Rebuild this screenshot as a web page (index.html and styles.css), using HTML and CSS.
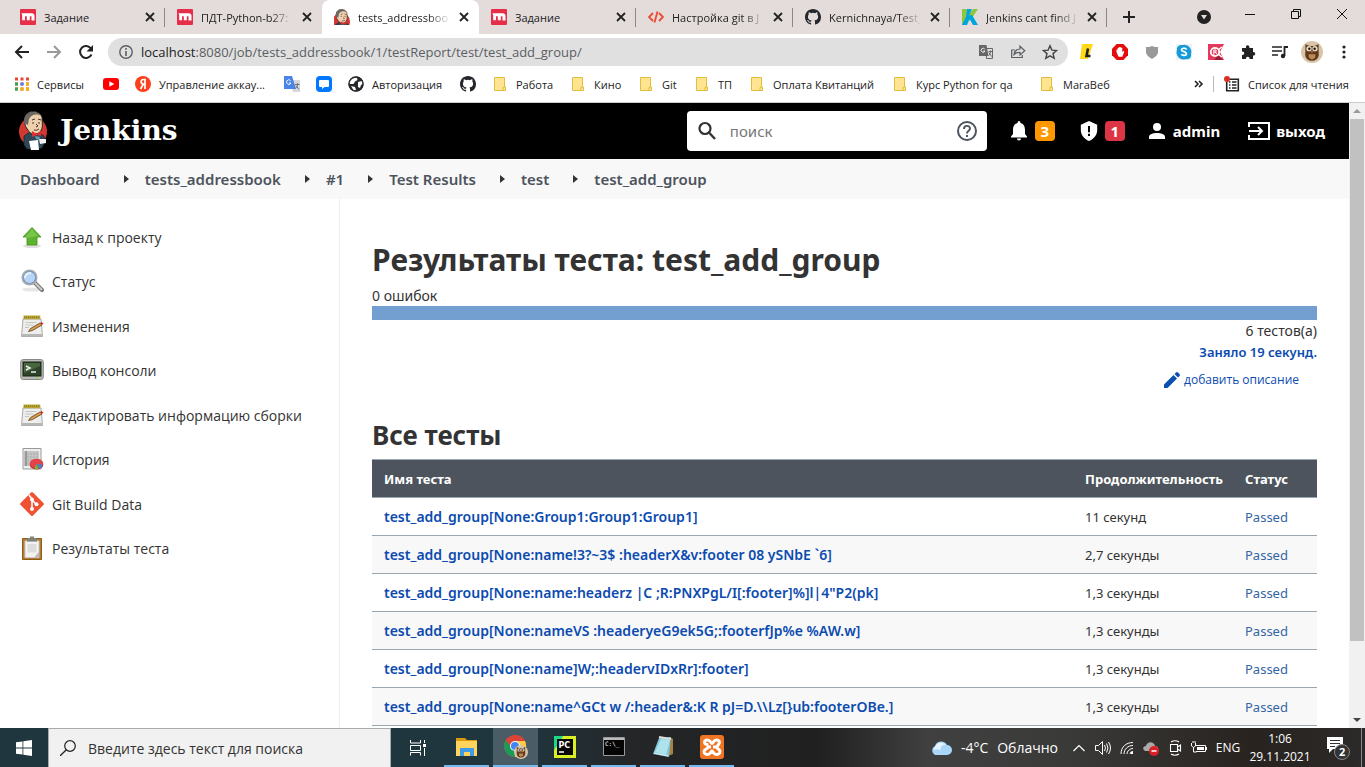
FILE: index.html
```html
<!DOCTYPE html>
<html lang="ru">
<head>
<meta charset="utf-8">
<title>Результаты теста: test_add_group</title>
<link rel="stylesheet" href="styles.css">
</head>
<body>
<svg class="defs" aria-hidden="true">
  <symbol id="x" viewBox="0 0 10 10"><path d="M1 1l8 8M9 1L1 9" stroke="#222" stroke-width="1.8"/></symbol>
  <symbol id="miro" viewBox="0 0 16 16"><rect width="16" height="16" rx="1" fill="#e62e48"/><path d="M1.500 4.200h10.300c1.600 0 2.700 1 2.700 2.400v5h-3V7.300H9.800v4H6.800v-4H5v4H2.200V6.200z" fill="#fff"/></symbol>
  <symbol id="github" viewBox="0 0 16 16"><path fill="#24262b" d="M8 0C3.580 0 0 3.580 0 8c0 3.540 2.290 6.530 5.470 7.590.4.070.55-.17.55-.38v-1.490c-2.010.37-2.530-.49-2.690-.94-.09-.23-.48-.94-.82-1.130-.28-.15-.68-.52-.01-.53.630-.01 1.080.58 1.230.82.720 1.210 1.870.87 2.330.66.070-.52.280-.87.510-1.070-1.780-.2-3.640-.89-3.640-3.950 0-.87.310-1.590.820-2.150-.08-.2-.36-1.020.080-2.120 0 0 .67-.21 2.200.82a7.600 7.600 0 0 1 4 0c1.530-1.040 2.200-.82 2.200-.82.440 1.100.160 1.920.080 2.120.510.56.820 1.270.820 2.150 0 3.070-1.870 3.750-3.650 3.950.290.25.540.73.540 1.480v2.200c0 .21.150.46.550.38A8 8 0 0 0 16 8c0-4.420-3.580-8-8-8z"/></symbol>
  <symbol id="folder" viewBox="0 0 12 14"><path d="M.5.500h10v9.500h1v3.500H.5z" fill="#ffe591" stroke="#e3bd3d"/><path d="M9 13.300v-3h1.500" fill="none" stroke="#e3bd3d"/></symbol>
  <symbol id="owl" viewBox="0 0 20 20"><circle cx="10" cy="10" r="10" fill="#d8c5a8"/><path d="M4 3l4 1.500h4L16 3v7c1 5-2 8-6 8s-7-3-6-8z" fill="#62391e"/><circle cx="7.300" cy="7" r="2.400" fill="#eadfc7"/><circle cx="12.700" cy="7" r="2.400" fill="#eadfc7"/><circle cx="7.600" cy="7" r="1.100" fill="#21150d"/><circle cx="12.400" cy="7" r="1.100" fill="#21150d"/><path d="M9 9h2l-1 2zM7 12h6v3l-3 2-3-2z" fill="#b78a58"/></symbol>
  <symbol id="butler" viewBox="0 0 30 40"><ellipse cx="15" cy="20.500" rx="14" ry="14.500" fill="#d33833"/><path d="M6 25l6-4 8 0 6 4 1 6-3 6-4 1-11 0-3-4z" fill="#2f4858" stroke="#142026" stroke-width=".7"/><path d="M9 18C5 12 6 5 10 2c5-3 12-1 14 4l.4 8c0 5-3 9-7 9s-6-1-8-5z" fill="#efd0ac" stroke="#2d241e"/><path d="M7 14C4 8 8 1 14 1c4-.2 7 1 9 4-5-3-10-1-12 3l-1 6-2-1z" fill="#6a6764"/><path d="M14 9l3-1m3 0l3 1m-9 3h2m4 0h2m-4 1l2 2-2 1m-2 3q3 1 5-1" stroke="#433" fill="none"/><path d="M14 20l5 3 4-3v5l-4-1-5 2z" fill="#e62f34"/><path d="M11 30l9-1 1 10h-8z" fill="#fff"/><path d="M21 28l7 0v4l-6 1z" fill="#f2f2f2"/><path d="M17 25l5 1-1 3-3-1z" fill="#6d98b4"/></symbol>
  <symbol id="notepad" viewBox="0 0 24 24"><path d="M3 5h18l1.500 17.500h-21z" fill="#eeeeec" stroke="#aaa"/><path d="M1 20h22v2.500H1z" fill="#b7b7b3"/><path d="M3.500 1.500h16.800v3.700H3.500z" fill="#b8a432"/><path d="M4 3.200h16" stroke="#7b6a18" stroke-dasharray="1 1"/><path d="M5.500 8.500h11M5.500 11h8M5 13.500h4" stroke="#c4c4c0"/><path d="M8.500 17.500l2-3L20 9l2 2-9.500 5.500z" fill="#d39b50" stroke="#654318" stroke-width=".8"/><path d="M20 9l1.500-1 2 1.500L22 11z" fill="#d9302c"/></symbol>
</svg>

<nav class="tabs" aria-label="Вкладки">
  <div class="tab"><svg class="i16"><use href="#miro"/></svg><span>Задание</span><button aria-label="Закрыть"><svg class="i10"><use href="#x"/></svg></button></div>
  <div class="tab no-line"><svg class="i16"><use href="#miro"/></svg><span class="fade">ПДТ-Python-b27:</span><button aria-label="Закрыть"><svg class="i10"><use href="#x"/></svg></button></div>
  <div class="tab active no-line"><svg class="i16" viewBox="3 0 26 26"><use href="#butler" width="30" height="40"/></svg><span class="fade">tests_addressboo</span><button aria-label="Закрыть"><svg class="i10"><use href="#x"/></svg></button></div>
  <div class="tab"><svg class="i16"><use href="#miro"/></svg><span>Задание</span><button aria-label="Закрыть"><svg class="i10"><use href="#x"/></svg></button></div>
  <div class="tab"><svg class="i16" viewBox="0 0 16 16"><path d="M5 4L1 8l4 4m6-8l4 4-4 4M9.500 2.500l-3 11" fill="none" stroke="#ee4b37" stroke-width="1.900"/></svg><span class="fade">Настройка git в J</span><button aria-label="Закрыть"><svg class="i10"><use href="#x"/></svg></button></div>
  <div class="tab"><svg class="i16"><use href="#github"/></svg><span class="fade">Kernichnaya/Test_</span><button aria-label="Закрыть"><svg class="i10"><use href="#x"/></svg></button></div>
  <div class="tab"><svg class="i16" viewBox="0 0 16 16"><path d="M11 0h5L8 12 5 8z" fill="#8dc63f"/><path d="M5 0h5L4 13 0 16l2-8z" fill="#00a5dc"/><path d="M0 0h5L4 8 0 16z" fill="#8dc63f"/><path d="M0 16L6 5l3 2-4 9z" fill="#00a5dc"/><path d="M6 7l4-1 6 10h-5z" fill="#00a5dc"/></svg><span class="fade">Jenkins cant find J</span><button aria-label="Закрыть"><svg class="i10"><use href="#x"/></svg></button></div>
  <button class="newtab" aria-label="Новая вкладка"><svg class="i12" viewBox="0 0 12 12"><path d="M6 0v12M0 6h12" stroke="#222" stroke-width="2"/></svg></button>
  <div class="window">
    <button aria-label="Поиск вкладок"><svg class="i14" viewBox="0 0 14 14"><circle cx="7" cy="7" r="7" fill="#222"/><path d="M4 5h6L7 9.500z" fill="#e4dcda"/></svg></button>
    <button class="up" aria-label="Свернуть"><svg class="i10" viewBox="0 0 10 10"><path d="M0 5.500h10" stroke="#111"/></svg></button>
    <button class="up" aria-label="Развернуть"><svg class="i10" viewBox="0 0 10 10"><path d="M.5 2.500h7v7h-7zM2.500 2.500v-2h7v7h-2" fill="none" stroke="#111"/></svg></button>
    <button class="up" aria-label="Закрыть окно"><svg class="i10" viewBox="0 0 10 10"><path d="M0 0l10 10M10 0L0 10" stroke="#111"/></svg></button>
  </div>
</nav>

<div class="toolbar">
  <div class="navbtns">
    <button aria-label="Назад"><svg class="i16" viewBox="0 0 16 16"><path d="M15 8H2m6-6L2 8l6 6" fill="none" stroke="#222" stroke-width="2"/></svg></button>
    <button aria-label="Вперёд"><svg class="i16" viewBox="0 0 16 16"><path d="M1 8h13M8 2l6 6-6 6" fill="none" stroke="#999" stroke-width="2"/></svg></button>
    <button aria-label="Обновить"><svg class="i16" viewBox="0 0 16 16"><path d="M13.500 10.500A6 6 0 1 1 13 4.500" fill="none" stroke="#222" stroke-width="2"/><path d="M15 1v6.500H8.500z" fill="#222"/></svg></button>
  </div>
  <div class="address">
    <svg class="i14" viewBox="0 0 14 14"><circle cx="7" cy="7" r="6.200" fill="none" stroke="#5b5e62" stroke-width="1.400"/><path d="M7 6v5M7 3v1.700" stroke="#5b5e62" stroke-width="1.600"/></svg>
    <a class="url" href="#"><b>localhost</b>:8080/job/tests_addressbook/1/testReport/test/test_add_group/</a>
    <button aria-label="Перевести"><svg class="i16" viewBox="0 0 16 16"><path d="M8 4.500h6.500v10H8.500z" fill="none" stroke="#666"/><path d="M1 1h7.500l2 11H1z" fill="#666"/><path d="M6.700 5A2 2 0 1 0 7 7H5.200" stroke="#eee" fill="none"/><path d="M10.500 7.500h3.500m-1.500-1v1c0 2-1 3-2 4m.5-3l2.500 4" stroke="#666" fill="none"/></svg></button>
    <button aria-label="Поделиться"><svg class="i16" viewBox="0 0 16 16"><path d="M5 6H1.700v7.500h10.600V11M4 10.500C4.500 7 6.500 5.300 10 5V2.200l4.800 4.500L10 11V8.300C7.500 8.300 5.500 9 4 10.500z" fill="none" stroke="#5b5e62" stroke-width="1.200"/></svg></button>
    <button aria-label="В закладки"><svg class="i16" viewBox="0 0 16 16"><path d="M8 1.700l1.900 4.400 4.800.4-3.700 3.100 1.200 4.700L8 11.800l-4.200 2.500L5 9.600 1.300 6.500l4.800-.4z" fill="none" stroke="#444" stroke-width="1.400"/></svg></button>
  </div>
  <div class="exts">
    <button aria-label="L"><svg class="i16" viewBox="0 0 16 16"><path d="M2 0h11L8 15H0z" fill="#ffd817"/><path d="M8 4.500L6.500 12h4" stroke="#222" stroke-width="2.600" fill="none"/></svg></button>
    <button aria-label="AdBlock"><svg class="i16" viewBox="0 0 16 16"><path d="M4.700 0h6.600L16 4.700v6.600L11.300 16H4.700L0 11.300V4.700z" fill="#e40d0d"/><path d="M4.500 8V5.500h1.200V3.800h1.500V3h1.500v.8h1.600V8l1.200-1 .8.700-2 5H6.500z" fill="#fff"/></svg></button>
    <button aria-label="Защита"><svg class="i16" viewBox="0 0 16 16"><path d="M8 2c2 1 4 1 6 1v5c0 3-3 5-6 7-3-2-6-4-6-7V3c2 0 4 0 6-1z" fill="#999"/></svg></button>
    <button aria-label="Skype"><svg class="i16" viewBox="0 0 16 16"><path d="M0 0h16v16H0z" fill="#f1f1f1"/><path d="M5 1a4 4 0 0 0-4 5 7 7 0 0 0 9 9 4 4 0 0 0 5-5A7 7 0 0 0 7 1z" fill="#159bd9"/><path d="M10.700 5.500C9 3.500 5.500 4 5.500 5.800c0 2 5 1.600 5 3.900 0 2-4 2.300-5.200.6" fill="none" stroke="#fff" stroke-width="1.700"/></svg></button>
    <button aria-label="R"><svg class="i16" viewBox="0 0 16 16"><path d="M0 0h16l-4 8 4 8H0z" fill="#e5395b"/><path d="M10 11l5 5H6z" fill="#9d1c38"/><circle cx="7" cy="8" r="4.200" fill="#e5395b" stroke="#fff" stroke-width="1.800"/><path d="M5.800 11V6H8v2H6m1.500 0L9 10.500" stroke="#fff" fill="none"/><path d="M10 6l4-3M10 10l4 3" stroke="#fff" stroke-width="1.500"/></svg></button>
    <button aria-label="Расширения"><svg class="i16" viewBox="0 0 16 16"><path d="M2 4h4c-1-3 3.500-4 3.500 0H13v4c3-.5 3 4 0 3.500V15H9.500c.5-3-4-3-3.500 0H2v-4c3 .5 3-3.700 0-3.400z" fill="#222"/></svg></button>
    <button aria-label="Музыка"><svg class="i16" viewBox="0 0 16 16"><path d="M0 3h10M0 7h10M0 11h6" stroke="#222" stroke-width="1.700"/><path d="M12.500 12V3H16" stroke="#222" stroke-width="1.800" fill="none"/><circle cx="11" cy="12" r="2.200" fill="#222"/></svg></button>
    <button aria-label="Профиль"><svg class="i22"><use href="#owl"/></svg></button>
    <button aria-label="Меню"><svg class="i16" viewBox="0 0 16 16"><g fill="#222"><circle cx="8" cy="3" r="1.600"/><circle cx="8" cy="8" r="1.600"/><circle cx="8" cy="13" r="1.600"/></g></svg></button>
  </div>
</div>

<nav class="bookmarks" aria-label="Закладки">
  <a href="#"><svg class="i14" viewBox="0 0 14 14"><path d="M0 2h3M0 7h3M0 12h3M5.500 2h3M5.500 7h3M5.500 12h3M11 2h3M11 7h3M11 12h3" stroke="#ea4335" stroke-width="3"/><path d="M0 7h3M0 12h3" stroke="#34a853" stroke-width="3"/><path d="M5.500 7h3" stroke="#4285f4" stroke-width="3"/><path d="M5.500 12h3M11 7h3M11 12h3" stroke="#f6b400" stroke-width="3"/></svg>Сервисы</a>
  <a href="#" aria-label="YouTube"><svg class="i16" viewBox="0 0 16 16"><rect y="2" width="16" height="12" rx="3" fill="#f00"/><path d="M6.300 5.300l5 2.700-5 2.700z" fill="#fff"/></svg></a>
  <a href="#"><svg class="i16" viewBox="0 0 16 16"><circle cx="8" cy="8" r="8" fill="#fc3f1d"/><path d="M10 13V3.500H8.500c-3.200 0-3.200 4.500 0 4.500H10M8.500 8L5.500 13" stroke="#fff" stroke-width="1.700" fill="none"/></svg>Управление аккау...</a>
  <a href="#" aria-label="Переводчик"><svg class="i16" viewBox="0 0 16 16"><path d="M5 4h11v12H9z" fill="#d5d7da"/><path d="M0 0h8l4 13H0z" fill="#4a84e8"/><path d="M6.500 4.500A2.300 2.300 0 1 0 7 7H5" stroke="#fff" fill="none"/><path d="M11 8.500h4.500m-2-1.500v1.500c0 2-1 3-2 4m.5-3l3 4" stroke="#777" fill="none"/></svg></a>
  <a href="#" aria-label="Чат"><svg class="i16" viewBox="0 0 16 16"><rect width="16" height="16" rx="4" fill="#0077ff"/><path d="M4 4h8q1 0 1 1v5q0 1-1 1H8.500L6 13v-2H4q-1 0-1-1V5q0-1 1-1z" fill="#fff"/></svg></a>
  <a href="#"><svg class="i16" viewBox="0 0 16 16"><circle cx="8" cy="8" r="7.500" fill="#25282c"/><path d="M7 1l2 1 .5 2L7 5.500 5.500 8H2L1 7l1-4zM10 6l4-1 1 3-2 1-1 3-2-1V9zM3 10l4 1 1 3-2 1z" fill="#fff"/><circle cx="8" cy="8" r="7" fill="none" stroke="#25282c" stroke-width="1.400"/></svg>Авторизация</a>
  <a href="#" aria-label="GitHub"><svg class="i16"><use href="#github"/></svg></a>
  <a class="dir" href="#"><svg><use href="#folder"/></svg>Работа</a>
  <a class="dir" href="#"><svg><use href="#folder"/></svg>Кино</a>
  <a class="dir" href="#"><svg><use href="#folder"/></svg>Git</a>
  <a class="dir" href="#"><svg><use href="#folder"/></svg>ТП</a>
  <a class="dir" href="#"><svg><use href="#folder"/></svg>Оплата Квитанций</a>
  <a class="dir" href="#"><svg><use href="#folder"/></svg>Курс Python for qa</a>
  <a class="dir" href="#"><svg><use href="#folder"/></svg>МагаВеб</a>
  <button class="more" aria-label="Ещё закладки"><svg class="i10" viewBox="0 0 10 10"><path d="M1 2l3 3-3 3m4-6l3 3-3 3" fill="none" stroke="#222" stroke-width="1.600"/></svg></button>
  <a class="reading" href="#"><svg class="i16" viewBox="0 0 16 16"><path d="M2.700 3.200h11.600v11.600H2.700z" fill="#fff" stroke="#222" stroke-width="1.600"/><path d="M5 6h1.500M5 9h1.500M5 12h1.500M8 6h4.500M8 9h4.500M8 12h4.500" stroke="#222" stroke-width="1.300"/><circle cx="3" cy="3" r="3" fill="#d93025"/></svg>Список для чтения</a>
</nav>

<div class="viewport">
<div class="page">
  <header class="head">
    <a class="brand" href="#"><svg class="butler"><use href="#butler"/></svg>Jenkins</a>
    <div class="search">
      <svg class="i20" viewBox="0 0 20 20"><circle cx="8" cy="7.500" r="5.500" fill="none" stroke="#333" stroke-width="2.200"/><path d="M12 11.500l6 6.500" stroke="#333" stroke-width="2.400"/></svg>
      <input type="text" aria-label="Поиск" placeholder="поиск">
      <a href="#" aria-label="Справка"><svg class="i20" viewBox="0 0 20 20"><circle cx="10" cy="10" r="9" fill="none" stroke="#4d545d" stroke-width="2"/><path d="M7 8c0-4 6-4 6-.6 0 2.400-3 2.300-3 5M10 14v2" fill="none" stroke="#4d545d" stroke-width="1.900"/></svg></a>
    </div>
    <div class="actions">
      <a href="#" aria-label="Уведомления"><svg class="i20" viewBox="0 0 20 20"><path d="M10 0q1.500 0 1.500 2C15 3 16 6 16 9v4l2 2.500v1H2v-1L4 13V9c0-3 1-6 4.500-7Q8.500 0 10 0zM8 17.500h4q0 2-2 2t-2-2z" fill="#fff"/></svg><span class="badge warn">3</span></a>
      <a href="#" aria-label="Безопасность"><svg class="i20" viewBox="0 0 20 22"><path d="M10 0l9 4v6c0 6-4 10-9 12-5-2-9-6-9-12V4z" fill="#fff"/><path d="M10 5.500v7M10 14v2.500" stroke="#000" stroke-width="2.200"/></svg><span class="badge err">1</span></a>
      <a class="user" href="#"><svg class="i16" viewBox="0 0 16 16"><circle cx="8" cy="4" r="4" fill="#fff"/><path d="M0 16v-2c0-3 4-4 8-4s8 1 8 4v2z" fill="#fff"/></svg>admin</a>
      <a href="#"><svg class="i22" viewBox="0 0 22 20"><path d="M1 6V2h20v16H1v-4M1 10h12M10 6l4 4-4 4" fill="none" stroke="#fff" stroke-width="2"/></svg>выход</a>
    </div>
  </header>
  <nav class="crumbs" aria-label="Навигация">
    <a href="#">Dashboard</a><i></i><a href="#">tests_addressbook</a><i></i><a href="#">#1</a><i></i><a href="#">Test Results</a><i></i><a href="#">test</a><i></i><a href="#">test_add_group</a>
  </nav>
  <div class="cols">
    <ul class="side">
      <li><a href="#"><svg class="i24" viewBox="0 0 24 24"><ellipse cx="12" cy="21" rx="9" ry="2" fill="#ddd"/><path d="M12 2.500l9 9.500h-4v8H7v-8H3z" fill="#5db32c" stroke="#3f9112" stroke-width=".8"/><path d="M12 4l6 7-10 2-3-1z" fill="#8ad25d" opacity=".6"/></svg>Назад к проекту</a></li>
      <li><a href="#"><svg class="i24" viewBox="0 0 24 24"><ellipse cx="12" cy="20.500" rx="10" ry="2" fill="#e6e6e6"/><path d="M14 13l8 8" stroke="#777" stroke-width="4" stroke-linecap="round"/><path d="M15 14l7 7" stroke="#ccc" stroke-width="2"/><circle cx="9.500" cy="8.500" r="7" fill="#a9ccf3" stroke="#aaa" stroke-width="2"/><circle cx="9.500" cy="8.500" r="6" fill="#b8d5f6" stroke="#5a86c4" stroke-width=".8"/><path d="M5 9q0-5 6-5" stroke="#e9f4ff" stroke-width="2" fill="none"/></svg>Статус</a></li>
      <li><a href="#"><svg class="i24"><use href="#notepad"/></svg>Изменения</a></li>
      <li><a href="#"><svg class="i24" viewBox="0 0 24 24"><rect x=".7" y="1.500" width="22.600" height="20" rx="2.500" fill="#b8bab5" stroke="#888"/><rect x="3" y="4" width="18" height="14" fill="#2c4428" stroke="#172214"/><path d="M4 5h16v3L4 15z" fill="#49663e"/><path d="M6 8l4 2-4 2M11 14h5" stroke="#eee" stroke-width="1.400" fill="none"/><path d="M16 20h2" stroke="#7be000"/></svg>Вывод консоли</a></li>
      <li><a href="#"><svg class="i24"><use href="#notepad"/></svg>Редактировать информацию сборки</a></li>
      <li><a href="#"><svg class="i24" viewBox="0 0 24 24"><path d="M3 1.500h18v20.500H3z" fill="#eee" stroke="#999"/><path d="M5 4h14v15H5z" fill="#ccc"/><path d="M8 4v15M11 4v15M14 4v15M17 4v15M5 7h14M5 10h14M5 13h14M5 16h14" stroke="#aaa" stroke-width=".6"/><path d="M4.500 4h2.500v15H4.500z" fill="#999"/><ellipse cx="16.500" cy="17.500" rx="6.800" ry="5" fill="#bd2020"/><ellipse cx="16.500" cy="16.500" rx="6.600" ry="4.800" fill="#e44347"/><path d="M16.500 17l6 .5c-.5 3-2.500 4-4 4z" fill="#4b80c5"/><path d="M16.500 17l2 5h-4z" fill="#71bd29"/></svg>История</a></li>
      <li><a href="#"><svg class="i24" viewBox="0 0 24 24"><path d="M11 .6q1-1 2 0L23.400 11q1 1 0 2L13 23.400q-1 1-2 0L.6 13q-1-1 0-2z" fill="#f05133"/><path d="M9 3l3 4v10M12 8l4 4" stroke="#fff" stroke-width="1.600" fill="none"/><g fill="#fff"><circle cx="12" cy="7.500" r="2"/><circle cx="12" cy="17" r="2"/><circle cx="16.500" cy="12.300" r="2"/></g></svg>Git Build Data</a></li>
      <li><a href="#"><svg class="i24" viewBox="0 0 24 24"><path d="M2.500 2.500h19v21h-19z" fill="#b67d32" stroke="#8c5b18"/><path d="M5 5h14v16.500H5z" fill="#f3f3f1" stroke="#ccc"/><path d="M7.500 8h9v8.500h-9z" fill="#ddd"/><path d="M19 16v5.500h-5z" fill="#bbb"/><path d="M7 2h3V.5h4V2h3v3.500H7z" fill="#7f817d"/></svg>Результаты теста</a></li>
    </ul>
    <main class="main">
      <h1>Результаты теста: test_add_group</h1>
      <div class="line">0 ошибок</div>
      <div class="bar"></div>
      <div class="line right">6 тестов(а)</div>
      <div class="line right"><a href="#">Заняло 19 секунд.</a></div>
      <div class="desc"><a href="#"><svg class="i16" viewBox="0 0 16 16"><path d="M0 12.500L9.500 3 13 6.500 3.500 16H0zM10.500 2L12 .5q1-.8 2 0L15.500 2q.8 1 0 2L14 5.500z" fill="#0b4fb3"/></svg>добавить описание</a></div>
      <h2>Все тесты</h2>
      <table>
        <thead><tr><th>Имя теста</th><th class="c2">Продолжительность</th><th class="c3">Статус</th></tr></thead>
        <tbody>
          <tr><td><a href="#">test_add_group[None:Group1:Group1:Group1]</a></td><td>11 секунд</td><td class="ok">Passed</td></tr>
          <tr><td><a href="#">test_add_group[None:name!3?~3$ :headerX&amp;v:footer 08 ySNbE `6]</a></td><td>2,7 секунды</td><td class="ok">Passed</td></tr>
          <tr><td><a href="#">test_add_group[None:name:headerz |C ;R:PNXPgL/I[:footer]%]l|4"P2(pk]</a></td><td>1,3 секунды</td><td class="ok">Passed</td></tr>
          <tr><td><a href="#">test_add_group[None:nameVS :headeryeG9ek5G;:footerfJp%e %AW.w]</a></td><td>1,3 секунды</td><td class="ok">Passed</td></tr>
          <tr><td><a href="#">test_add_group[None:name]W;:headervIDxRr]:footer]</a></td><td>1,3 секунды</td><td class="ok">Passed</td></tr>
          <tr><td><a href="#">test_add_group[None:name^GCt w /:header&amp;:K R pJ=D.\\Lz[}ub:footerOBe.]</a></td><td>1,3 секунды</td><td class="ok">Passed</td></tr>
        </tbody>
      </table>
    </main>
  </div>
</div>
<div class="scroll" aria-hidden="true"><svg class="i16" viewBox="0 0 16 16"><path d="M4 10h8L8 6z" fill="#999"/></svg><div class="track"><div class="thumb"></div></div><svg class="i16" viewBox="0 0 16 16"><path d="M4 6h8l-4 4z" fill="#444"/></svg></div>
</div>

<footer class="taskbar">
  <button class="start" aria-label="Пуск"><svg class="i16" viewBox="0 0 16 16"><path d="M0 2.300l6.500-.9v6.200H0zM7.300 1.300L16 0v7.600H7.300zM0 8.400h6.500v6.200L0 13.700zM7.300 8.400H16V16l-8.700-1.300z" fill="#fff"/></svg></button>
  <div class="find"><svg class="i16" viewBox="0 0 16 16"><circle cx="10" cy="6" r="5.300" fill="none" stroke="#222" stroke-width="1.200"/><path d="M6.300 9.700L0 16" stroke="#222" stroke-width="1.300"/></svg><input type="text" aria-label="Поиск в Windows" placeholder="Введите здесь текст для поиска"></div>
  <button class="view" aria-label="Представление задач"><svg class="i16" viewBox="0 0 16 16"><path d="M.5 0v3h10V0M.5 5.500h10v5H.5zM.5 15.500v-3h10v3M14.500 0v3M14.500 8v8" fill="none" stroke="#fff"/><path d="M13 4h3v3h-3z" fill="#fff"/></svg></button>
  <div class="apps">
    <button aria-label="Проводник"><svg class="i24" viewBox="0 0 24 24"><path d="M1 3h9l2 2h10v2H1z" fill="#d99a10"/><path d="M1 6h21v15H1z" fill="#ffd35c"/><path d="M5 21v-8h14v8h-4v-4H9v4z" fill="#3f9be8"/></svg></button>
    <button class="on" aria-label="Chrome"><svg class="i24" viewBox="0 0 24 24"><circle cx="11" cy="11" r="11" fill="#db4437"/><path d="M1.500 5.500A11 11 0 0 0 11 22l5-8z" fill="#1a9b58"/><path d="M11 22A11 11 0 0 0 21 6H11z" fill="#ffcd40"/><path d="M2 5l6 9 3-8h10C18-1 7-2 2 5z" fill="#db4437"/><circle cx="11" cy="11" r="5" fill="#fff"/><circle cx="11" cy="11" r="4" fill="#4285f4"/><svg x="10" y="10" width="14" height="14"><use href="#owl"/></svg></svg></button>
    <button aria-label="PyCharm"><svg class="i24" viewBox="0 0 24 24"><path d="M1 1h22v22H1z" fill="#d9ee24"/><path d="M1 1h9l-3 6-6 8z" fill="#20d789"/><path d="M4 4h16v16H4z" fill="#080808"/><text x="5.500" y="12.500" class="pc">PC</text><path d="M6 17h5" stroke="#fff" stroke-width="1.500"/></svg></button>
    <button aria-label="Командная строка"><svg class="i24" viewBox="0 0 24 24"><path d="M1.500 2.500h21v18h-21z" fill="#050505" stroke="#999"/><path d="M2 3h20v2H2z" fill="#bbb"/><text x="3" y="11" class="cmd">C:\_</text></svg></button>
    <button aria-label="Блокнот"><svg class="i24" viewBox="0 0 24 24"><path d="M20 3l2 1v15l-5 2z" fill="#a98241"/><path d="M8 3l12-1-2 20-16-3z" fill="#83c6d6"/><path d="M10 4l9 1-4 15-11-3z" fill="#aee2ec"/><path d="M8 2l12 2" stroke="#ddd" stroke-width="2"/><path d="M3 18l14 3" stroke="#e6f5f8"/></svg></button>
    <button aria-label="XAMPP"><svg class="i24" viewBox="0 0 24 24"><rect width="24" height="24" rx="3" fill="#ef7522"/><path d="M8.500 9.500C6 10 4.500 8.700 4.500 7S7 4.500 9 5.500s2 3 3 3 1-2 3-3 4.500 0 4.500 1.800S17.500 10 17 12s3 2 3 4.500-3 3.500-5 2.500-2-3-3-3-1 2-3 3-5 0-5-2.500S8 14 8 12h3m2 0h3" fill="none" stroke="#fff" stroke-width="3"/></svg></button>
  </div>
  <div class="tray">
    <a class="weather" href="#"><svg class="i22" viewBox="0 0 22 20"><path d="M5 17a5 5 0 0 1 0-9 6.500 6.500 0 0 1 12-1 5 5 0 0 1 0 10z" fill="#a9d7fb"/><path d="M5 9a6.500 6.500 0 0 1 11-2c-5-1-6 4-5 5-3-1-5-1-8 0z" fill="#e4f5ff"/></svg><span>-4°C</span><span>Облачно</span></a>
    <button aria-label="Скрытые значки"><svg class="i12" viewBox="0 0 12 12"><path d="M.5 9L6 3.500 11.500 9" fill="none" stroke="#fff" stroke-width="1.200"/></svg></button>
    <button aria-label="Громкость"><svg class="i16" viewBox="0 0 16 16"><path d="M.5 5.500h3l4-4v13l-4-4h-3zM9.500 5q2 3 0 6M11.500 3.500q3 4.500 0 9M13.500 2q4 6 0 12" fill="none" stroke="#fff"/></svg></button>
    <button aria-label="Wi-Fi"><svg class="i14" viewBox="0 0 14 14"><path d="M1 13C1 6 6 1.500 13 1.500M4 13c0-5 4-8.500 9-8.500M7 13c0-3 3-5.500 6-5.500M10 13q0-2.500 3-2.500" fill="none" stroke="#fff"/><path d="M11 11h2v2h-2z" fill="#fff"/></svg></button>
    <button aria-label="Облако"><svg class="i16" viewBox="0 0 16 16"><path d="M2 11C-1 9 0 6 3 6c1-5 8-5 9 0 3 0 4 3 3 5z" fill="#aaa"/><circle cx="11" cy="11" r="5" fill="#d92028"/><path d="M8.500 11h5" stroke="#fff" stroke-width="1.500"/></svg></button>
    <button aria-label="Камера"><svg class="i16" viewBox="0 0 16 16"><path d="M4 2q4-2.500 8 0M4 14q4 2.500 8 0M3.500 4.500h7v7h-7zM10.500 7l3-2v6l-3-2" fill="none" stroke="#fff" stroke-width="1.100"/></svg></button>
    <button aria-label="Питание"><svg class="i16" viewBox="0 0 16 16"><path d="M5 5.500h9.500v6H5M15.500 7v3M.5 3v3q2 3 4 0V3M2 1v2m2-2v2M2.500 7v5h3" fill="none" stroke="#fff"/><path d="M6 7h7v3H6z" fill="#fff"/></svg></button>
    <span class="lang">ENG</span>
    <span class="clock">1:06<br>29.11.2021</span>
    <button aria-label="Уведомления: 2"><svg class="i24" viewBox="0 0 24 24"><path d="M1 1h16v12H7l-4 4v-4H1z" fill="#fff"/><path d="M4 4.500h10M4 7.500h10M4 10.500h5" stroke="#333"/><circle cx="16" cy="16" r="7.500" fill="#333" stroke="#888"/><text x="13" y="20" class="cnt">2</text></svg></button>
  </div>
</footer>
</body>
</html>
```
FILE: styles.css
```css
* { box-sizing: border-box; }
body { margin: 0; height: 100vh; display: flex; flex-direction: column; overflow: hidden; background: #fff; color: #333; font: 14px "Noto Sans", "Open Sans", sans-serif; }
a { color: inherit; text-decoration: none; }
button { border: 0; padding: 0; background: none; color: inherit; display: flex; align-items: center; justify-content: center; }
input { border: 0; padding: 0; background: none; font: inherit; outline: 0; min-width: 0; flex: 1; }
svg { display: block; flex: none; }
.defs { display: none; }
.i10 { width: 10px; height: 10px; }
.i12 { width: 12px; height: 12px; }
.i14 { width: 14px; height: 14px; }
.i16 { width: 16px; height: 16px; }
.i20 { width: 20px; height: 20px; }
.i22 { width: 22px; height: 22px; }
.i24 { width: 24px; height: 24px; }

.tabs { display: flex; height: 34px; flex: none; padding-left: 8px; background: #e4dcda; font: 11px "Open Sans", sans-serif; color: #222; }
.tab { flex: 0 1 157px; min-width: 0; display: flex; align-items: center; gap: 8px; padding: 0 10px 0 12px; position: relative; }
.tab::after { content: ""; position: absolute; right: 0; top: 8px; width: 1px; height: 19px; background: #888; }
.no-line::after { display: none; }
.tab:first-child::after { display: block; }
.tab span { flex: 1; min-width: 0; overflow: hidden; white-space: nowrap; }
.fade { -webkit-mask-image: linear-gradient(90deg, #000 75%, transparent); mask-image: linear-gradient(90deg, #000 75%, transparent); }
.active { background: #fff; border-radius: 8px 8px 0 0; }
.newtab { width: 43px; }
.window { margin-left: auto; display: flex; }
.window button { width: 46px; }
.window .up { align-items: flex-start; padding-top: 9px; }

.toolbar { display: flex; align-items: center; height: 36px; flex: none; padding: 0 5px 0 6px; }
.navbtns { display: flex; width: 102px; }
.navbtns button, .exts button { width: 32px; height: 32px; }
.address { flex: 1; min-width: 0; height: 28px; border-radius: 14px; background: #e0e0e0; display: flex; align-items: center; gap: 8px; padding: 0 6px 0 11px; }
.address button { width: 24px; }
.url { flex: 1; min-width: 0; overflow: hidden; white-space: nowrap; font: 13px "Open Sans", sans-serif; color: #5b5e62; }
.url b { font-weight: 400; color: #222; }
.exts { display: flex; padding-left: 4px; }

.bookmarks { display: grid; grid-template-columns: 88px 32px 149px 32px 32px 112px 34px 78px 68px 56px 55px 143px 147px 72px 1fr 152px; align-items: center; height: 33px; flex: none; padding: 0 0 4px 15px; border-bottom: 1px solid #ccc; font: 11px "Open Sans", sans-serif; color: #222; white-space: nowrap; }
.bookmarks a { display: flex; align-items: center; gap: 8px; }
.dir svg { width: 12px; height: 14px; margin-right: 2px; }
.more { justify-content: flex-end; padding-right: 9px; }
.bookmarks .reading { border-left: 1px solid #bbb; padding-left: 10px; height: 16px; }

.viewport { flex: 1; min-height: 0; display: flex; overflow: hidden; }
.page { flex: 1; min-width: 0; display: flex; flex-direction: column; }
.scroll { width: 16px; background: #f1f1f1; display: flex; flex-direction: column; }
.track { flex: 1; padding: 0 1px; }
.thumb { height: 88%; background: #c1c1c1; }

.head { height: 56px; flex: none; background: #000; color: #fff; display: flex; align-items: center; padding: 0 24px 0 18px; font-weight: 700; font-size: 15px; }
.brand { display: flex; align-items: center; gap: 12px; font: bold 28px/40px "DejaVu Serif", serif; }
.butler { width: 30px; height: 40px; }
.search { margin-left: auto; width: 300px; height: 40px; border-radius: 4px; background: #fff; display: flex; align-items: center; padding: 0 10px; gap: 13px; font-weight: 400; }
.search input::placeholder { color: #777; }
.actions { display: flex; gap: 24px; padding-left: 22px; }
.actions a { display: flex; align-items: center; gap: 6px; }
.actions .user { gap: 8px; padding-right: 4px; }
.badge { width: 20px; height: 20px; border-radius: 4px; line-height: 20px; text-align: center; }
.warn { background: #ff9800; }
.err { background: #dc3545; }

.crumbs { height: 40px; flex: none; background: #f8f8f8; display: flex; align-items: center; padding-left: 20px; font-weight: 600; font-size: 15px; color: #4d545d; }
.crumbs i { border-left: 5px solid #333; border-top: 4px solid transparent; border-bottom: 4px solid transparent; margin: 0 16px 0 24px; }

.cols { flex: 1; min-height: 0; display: flex; }
.side { width: 340px; flex: none; margin: 0; padding: 16px 0 0 20px; list-style: none; border-right: 1px solid #eee; font-family: "Open Sans", sans-serif; font-weight: 500; }
.side li:nth-child(even) { margin-bottom: 1px; }
.side a { height: 44px; display: flex; align-items: center; gap: 8px; }
.main { flex: 1; min-width: 0; padding: 41px 32px 0; }
h1 { margin: 0 0 5px; font-size: 30px; line-height: 40px; }
h2 { margin: 27px 0 4px; font-size: 26px; line-height: 40px; }
.line { line-height: 21px; }
.right { text-align: right; }
.right a { color: #0b4bb0; font-weight: 600; font-size: 13px; }
.bar { height: 14px; background: #729fcf; }
.desc { display: flex; justify-content: flex-end; padding: 8px 18px 0 0; font: 500 12px/17px "Open Sans", sans-serif; color: #0b4bb0; }
.desc a { display: flex; align-items: center; gap: 4px; }
table { width: 100%; border-collapse: collapse; table-layout: fixed; font-size: 13px; }
th, td { height: 38px; padding: 0 12px; text-align: left; border: solid #98a6b0; border-width: 1px 0; white-space: nowrap; }
th { background: #4d545d; color: #fff; }
.c2 { width: 160px; }
.c3 { width: 84px; }
tbody tr:nth-child(even) { background: #f8f8f8; }
td a { font-weight: 600; font-size: 14px; color: #0b4bb0; }
.ok { color: #3465a4; }

.taskbar { height: 39px; flex: none; display: flex; background: linear-gradient(90deg, #20363f 38%, #242628 46%, #202020 60%, #404040 68%, #3a3a39 78%, #28231f 92%, #2c2a2a); color: #fff; font: 14px "Open Sans", sans-serif; }
.start { width: 48px; }
.find { width: 343px; background: #f1f1f1; border: 1px solid #aaa; border-bottom: 0; display: flex; align-items: center; gap: 12px; padding: 0 11px; }
.find input::placeholder { color: #333; }
.view { width: 53px; }
.apps { display: flex; gap: 4px; }
.apps button { width: 45px; border-bottom: 2px solid #76b9ed; }
.apps .on { background: #4a5d66; }
.tray { margin-left: auto; display: flex; align-items: center; border-right: 1px solid #888; margin-right: 3px; }
.tray button { width: 24px; height: 39px; }
.tray .weather { display: flex; align-items: center; gap: 9px; margin-right: 9px; }
.lang { width: 34px; text-align: center; font-size: 12px; }
.clock { width: 70px; text-align: center; font-size: 12px; line-height: 18px; }
.tray .clock + button { width: 46px; }
.pc { font: bold 8px "DejaVu Sans", sans-serif; fill: #fff; }
.cmd { font: 6px "DejaVu Sans Mono", monospace; fill: #fff; }
.cnt { font: bold 11px "Open Sans", sans-serif; fill: #fff; }
```
